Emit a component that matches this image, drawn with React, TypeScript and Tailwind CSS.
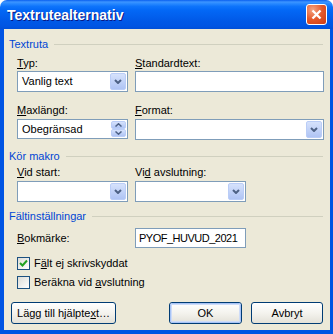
import React from "react";

const font = "font-['Liberation_Sans',Arial,sans-serif]";

const btnBlue = "rounded-[2px] border border-[#BACDF7] bg-gradient-to-b from-[#D6E2FC] to-[#AFC4F4]";

const Chevron = ({ up }: { up?: boolean }) => (
  <svg width="8" height="5" viewBox="0 0 8 5">
    <path d={up ? "M1 4 L4 1 L7 4" : "M1 1 L4 4 L7 1"} fill="none" stroke="#4D6185" strokeWidth="2" />
  </svg>
);

const Combo = ({ value = "" }: { value?: string }) => (
  <div className="h-[21px] flex items-center bg-white border border-[#7F9DB9] p-[1px]">
    <span className="flex-1 pl-[3px] text-[11px] leading-[13px] text-black">{value}</span>
    <div className={`w-[16px] h-full flex items-center justify-center ${btnBlue}`}>
      <Chevron />
    </div>
  </div>
);

const Spin = ({ value }: { value: string }) => (
  <div className="h-[20px] flex items-center bg-white border border-[#7F9DB9] p-[1px]">
    <span className="flex-1 pl-[3px] text-[11px] leading-[13px] text-black">{value}</span>
    <div className="w-[15px] h-full flex flex-col">
      <div className={`flex-1 flex items-center justify-center ${btnBlue}`}>
        <svg width="7" height="4" viewBox="0 0 7 4">
          <path d="M0.5 3.5 L3.5 0.8 L6.5 3.5" fill="none" stroke="#4D6185" strokeWidth="1.5" />
        </svg>
      </div>
      <div className={`flex-1 flex items-center justify-center ${btnBlue}`}>
        <svg width="7" height="4" viewBox="0 0 7 4">
          <path d="M0.5 0.5 L3.5 3.2 L6.5 0.5" fill="none" stroke="#4D6185" strokeWidth="1.5" />
        </svg>
      </div>
    </div>
  </div>
);

const GroupHeader = ({ title }: { title: string }) => (
  <div className="flex items-center h-[13px] pl-[5px] pr-[7px]">
    <span className="text-[11px] text-[#0046D5] leading-[13px]">{title}</span>
    <div className="flex-1 h-px bg-[#D0D0BF] ml-[6px]" />
  </div>
);

const Label = ({ children }: { children: React.ReactNode }) => (
  <div className="text-[11px] leading-[13px] text-black">{children}</div>
);

const Check = ({ checked }: { checked?: boolean }) => (
  <div className="w-[13px] h-[13px] border border-[#1C5180] bg-gradient-to-br from-[#DCDCD7] to-white flex items-center justify-center">
    {checked && (
      <svg width="9" height="9" viewBox="0 0 9 9">
        <path d="M1 4 L3.5 6.5 L8 1.5" fill="none" stroke="#21A121" strokeWidth="2" />
      </svg>
    )}
  </div>
);

const Button = ({ children, def, className = "" }: { children: React.ReactNode; def?: boolean; className?: string }) => (
  <div className={`h-[22px] rounded-[3px] border border-[#003C74] bg-gradient-to-b from-white via-[#F4F3EE] to-[#E3E1D8] ${className}`}>
    <div className={`h-full flex items-center justify-center rounded-[2px] text-[11px] leading-[13px] text-black ${def ? "border border-[#A8C4F6] shadow-[inset_0_0_0_1px_#CEDCF8]" : ""}`}>
      {children}
    </div>
  </div>
);

export default function App() {
  return (
    <div className={`w-[333px] h-[334px] flex flex-col bg-white ${font}`}>
      {/* title bar */}
      <div className="h-[29px] flex items-center rounded-t-[7px] bg-[linear-gradient(to_bottom,#0A5FEF_0%,#3D95FF_7%,#2A8AFF_12%,#0E74FB_22%,#0368F6_35%,#0260EE_55%,#0058E6_75%,#0055E3_90%,#004FD8_100%)] pl-[7px] pr-[6px]">
        <span className="flex-1 text-[14px] leading-[16px] font-bold text-white [text-shadow:1px_1px_0_#0A1883]">Textrutealternativ</span>
        <div className="w-[21px] h-[21px] rounded-[3px] border border-white bg-[radial-gradient(circle_at_30%_25%,#F4A482_0%,#E4582A_50%,#CC3A12_100%)] flex items-center justify-center">
          <svg width="11" height="11" viewBox="0 0 11 11">
            <path d="M1.5 1.5 L9.5 9.5 M9.5 1.5 L1.5 9.5" stroke="white" strokeWidth="2.3" />
          </svg>
        </div>
      </div>

      {/* client */}
      <div className="flex-1 flex flex-col bg-[#ECE9D8] border-l-4 border-r-[3px] border-b-4 border-[#0054E3] pt-[9px]">
        <GroupHeader title="Textruta" />
        <div className="grid grid-cols-[111px_189px] gap-x-[7px] pl-[13px] mt-[6px]">
          <div className="flex flex-col gap-[1px]">
            <Label><u>T</u>yp:</Label>
            <Combo value="Vanlig text" />
          </div>
          <div className="flex flex-col gap-[1px]">
            <Label><u>S</u>tandardtext:</Label>
            <div className="h-[21px] bg-white border border-[#7F9DB9]" />
          </div>
          <div className="flex flex-col gap-[2px] mt-[12px]">
            <Label><u>M</u>axlängd:</Label>
            <Spin value="Obegränsad" />
          </div>
          <div className="flex flex-col gap-[2px] mt-[12px]">
            <Label><u>F</u>ormat:</Label>
            <Combo />
          </div>
        </div>

        <div className="mt-[10px]">
          <GroupHeader title="Kör makro" />
        </div>
        <div className="grid grid-cols-[111px_111px] gap-x-[7px] pl-[13px] mt-[3px]">
          <div className="flex flex-col gap-[2px]">
            <Label><u>V</u>id start:</Label>
            <Combo />
          </div>
          <div className="flex flex-col gap-[2px]">
            <Label>Vi<u>d</u> avslutning:</Label>
            <Combo />
          </div>
        </div>

        <div className="mt-[8px]">
          <GroupHeader title="Fältinställningar" />
        </div>
        <div className="flex items-center pl-[13px] mt-[5px]">
          <div className="w-[118px]">
            <Label><u>B</u>okmärke:</Label>
          </div>
          <div className="w-[111px] h-[20px] bg-white border border-[#7F9DB9] flex items-center pl-[3px] text-[11px] leading-[13px] tracking-[-0.5px] text-black">
            PYOF_HUVUD_2021
          </div>
        </div>
        <div className="flex items-center gap-[4px] pl-[13px] mt-[9px]">
          <Check checked />
          <span className="text-[11px] leading-[13px] text-black">F<u>ä</u>lt ej skrivskyddat</span>
        </div>
        <div className="flex items-center gap-[4px] pl-[13px] mt-[6px]">
          <Check />
          <span className="text-[11px] leading-[13px] text-black">Beräkna vid <u>a</u>vslutning</span>
        </div>

        <div className="flex items-center pl-[7px] mt-[13px]">
          <Button className="w-[105px]">Lägg till hjälpte<u>x</u>t…</Button>
          <Button def className="w-[73px] ml-[53px]">OK</Button>
          <Button className="w-[72px] ml-[9px]">Avbryt</Button>
        </div>
      </div>
    </div>
  );
}
